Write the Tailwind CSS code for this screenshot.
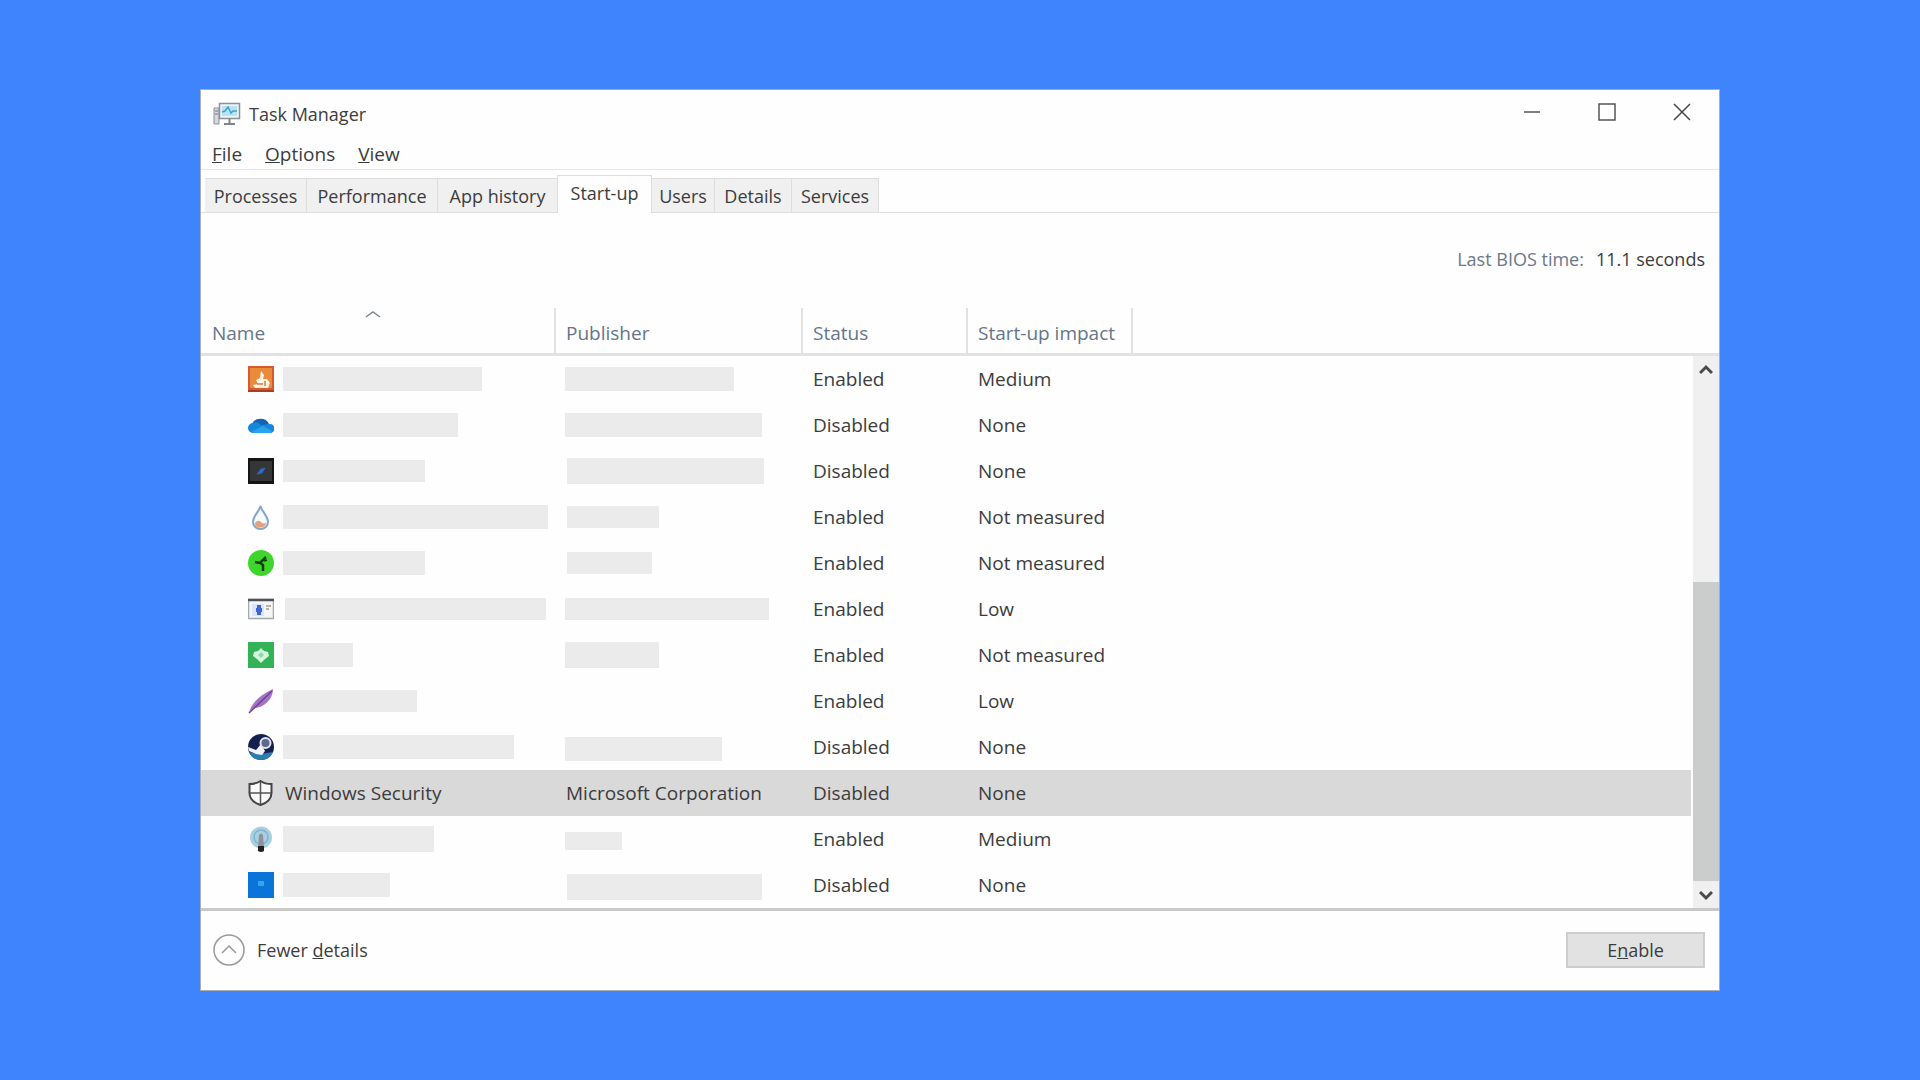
<!DOCTYPE html>
<html lang="en">
<head>
    <meta charset="UTF-8">
    <meta name="viewport" content="width=device-width, initial-scale=1.0">
    <title>Task Manager</title>
    <script src="https://cdn.jsdelivr.net/npm/@tailwindcss/browser@4"></script>
</head>
<body class="bg-[#3f83fd] min-h-screen flex items-center justify-center p-6 font-['Open_Sans','Noto_Sans',sans-serif] text-[18px] leading-6 text-[#3c3c3c]">
    <main class="w-full max-w-[1520px] bg-[#fefefe] border border-[#a9adb5]">
        <!-- Title bar -->
        <header class="flex items-center justify-between h-12 pl-3">
            <div class="flex items-center gap-2">
                <svg class="w-7 h-6" viewBox="0 0 28 24" fill="none">
                    <path d="M1 6h5v16H1z" fill="#d5d9dc" stroke="#8b9197"/>
                    <path d="M2 9h3M2 12h3" stroke="#6f767c"/>
                    <rect x="6.500" y="1.500" width="20" height="15" fill="#eef6fa" stroke="#8b9197" stroke-width="1.500"/>
                    <rect x="9" y="4" width="15" height="10" fill="#b9e3f4"/>
                    <path d="M9 10l3-1 3-4 3 6 2-2h4" stroke="#3ba3cf" stroke-width="1.500"/>
                    <path d="M16.500 17v4M11 22h11" stroke="#7d8388" stroke-width="2"/>
                </svg>
                <h1>Task Manager</h1>
            </div>
            <div class="flex h-full pb-1">
                <button type="button" aria-label="Minimize" class="w-[75px] flex items-center justify-center hover:bg-gray-200">
                    <svg class="size-[18px]" viewBox="0 0 18 18" stroke="#555" stroke-width="1.500"><path d="M1 9h16"/></svg>
                </button>
                <button type="button" aria-label="Maximize" class="w-[75px] flex items-center justify-center hover:bg-gray-200">
                    <svg class="size-[18px]" viewBox="0 0 18 18" fill="none" stroke="#555" stroke-width="1.500"><rect x="1" y="1" width="16" height="16"/></svg>
                </button>
                <button type="button" aria-label="Close" class="w-[75px] flex items-center justify-center hover:bg-red-500">
                    <svg class="size-[18px]" viewBox="0 0 18 18" stroke="#444" stroke-width="1.500"><path d="M1 1l16 16M17 1L1 17"/></svg>
                </button>
            </div>
        </header>

        <!-- Menu -->
        <nav class="flex items-center gap-[23px] h-8 pl-[11px] text-[19px] border-b border-[#e6e6e6]">
            <button type="button"><u>F</u>ile</button>
            <button type="button"><u>O</u>ptions</button>
            <button type="button"><u>V</u>iew</button>
        </nav>

        <!-- Tabs -->
        <div role="tablist" class="flex items-end h-[43px] pl-1 border-b border-[#dedede]">
            <button type="button" role="tab" class="w-[102px] h-[34px] bg-[#f0f0f0] border-t border-r border-[#dedede]">Processes</button>
            <button type="button" role="tab" class="w-[131px] h-[34px] bg-[#f0f0f0] border-t border-r border-[#dedede]">Performance</button>
            <button type="button" role="tab" class="w-[119px] h-[34px] bg-[#f0f0f0] border-t border-[#dedede]">App history</button>
            <button type="button" role="tab" aria-selected="true" class="w-[95px] h-[38px] -mb-px pb-1 bg-[#fefefe] border-t border-x border-[#dedede]">Start-up</button>
            <button type="button" role="tab" class="w-[63px] h-[34px] bg-[#f0f0f0] border-t border-r border-[#dedede]">Users</button>
            <button type="button" role="tab" class="w-[77px] h-[34px] bg-[#f0f0f0] border-t border-r border-[#dedede]">Details</button>
            <button type="button" role="tab" class="w-[87px] h-[34px] bg-[#f0f0f0] border-t border-r border-[#dedede]">Services</button>
        </div>

        <div class="flex items-center justify-end gap-3 h-[95px] pr-[14px] pb-1">
            <span class="text-[#6a788a]">Last BIOS time:</span>
            <span>11.1 seconds</span>
        </div>

        <!-- Start-up list -->
        <div class="flex border-b-3 border-[#c9c9c9]">
            <table class="flex-1 table-fixed border-separate border-spacing-0 text-left text-[19px]">
                <colgroup>
                    <col class="w-[355px]">
                    <col class="w-[247px]">
                    <col class="w-[165px]">
                    <col class="w-[165px]">
                    <col>
                </colgroup>
                <thead class="text-[#64758a]">
                    <tr class="h-12">
                        <th class="relative font-normal pl-[11px] pt-1 border-r-2 border-b-3 border-[#e2e2e2]">
                            Name
                            <svg class="absolute top-0.5 left-[164px] w-4 h-2" viewBox="0 0 16 8" fill="none" stroke="#7c8792" stroke-width="1.500"><path d="M1 7l7-5 7 5"/></svg>
                        </th>
                        <th class="font-normal pl-[10px] pt-1 border-r-2 border-b-3 border-[#e2e2e2]">Publisher</th>
                        <th class="font-normal pl-[10px] pt-1 border-r-2 border-b-3 border-[#e2e2e2]">Status</th>
                        <th class="font-normal pl-[10px] pt-1 border-r-2 border-b-3 border-[#e2e2e2]">Start-up impact</th>
                        <th class="border-b-3 border-[#e2e2e2]"></th>
                    </tr>
                </thead>
                <tbody>
                    <tr class="h-[46px]">
                        <td class="pl-[47px]">
                            <div class="flex items-center gap-[9px]">
                                <svg class="size-[26px]" viewBox="0 0 26 26">
                                    <rect width="26" height="26" fill="#d65a2c"/>
                                    <rect x="2" y="2" width="22" height="20" fill="#ea8a3c"/>
                                    <path d="M0 24h26v2H0z" fill="#a93f22"/>
                                    <path d="M13 5l3 4-1 4h4l3 4-2 5H7l-2-3 5-1-2-4 4-2z" fill="#fff3e6"/>
                                    <path d="M9 18h6M17 15v5" stroke="#e07a3a" stroke-width="1.500"/>
                                </svg>
                                <span class="w-[199px] h-6 bg-[#ebebeb]"></span>
                            </div>
                        </td>
                        <td class="pl-[9px]"><div class="w-[169px] h-6 bg-[#ebebeb]"></div></td>
                        <td class="pl-[10px]">Enabled</td>
                        <td class="pl-[10px]">Medium</td>
                        <td></td>
                    </tr>
                    <tr class="h-[46px]">
                        <td class="pl-[47px]">
                            <div class="flex items-center gap-[9px]">
                                <svg class="size-[26px]" viewBox="0 0 26 26">
                                    <path d="M4 12a9 8 0 0 1 17 0l-8 6z" fill="#1263b5"/>
                                    <path d="M5 21a5 5 0 0 1 0-10q4-2 8 2l9-1a4.500 4.500 0 0 1 0 9z" fill="#1688dc"/>
                                    <path d="M3 20l12-6 9 5q-1 2-3 2H6q-2 0-3-1z" fill="#27a4ee"/>
                                </svg>
                                <span class="w-[175px] h-6 bg-[#ebebeb]"></span>
                            </div>
                        </td>
                        <td class="pl-[9px]"><div class="w-[197px] h-6 bg-[#ebebeb]"></div></td>
                        <td class="pl-[10px]">Disabled</td>
                        <td class="pl-[10px]">None</td>
                        <td></td>
                    </tr>
                    <tr class="h-[46px]">
                        <td class="pl-[47px]">
                            <div class="flex items-center gap-[9px]">
                                <svg class="size-[26px]" viewBox="0 0 26 26">
                                    <rect width="26" height="26" fill="#151515"/>
                                    <rect x="2" y="3" width="22" height="20" fill="#343638"/>
                                    <path d="M9 16l4-5 4-1-3 5z" fill="#2f6bd8" stroke="#2f5fb8"/>
                                </svg>
                                <span class="w-[142px] h-[22px] bg-[#ebebeb]"></span>
                            </div>
                        </td>
                        <td class="pl-[11px]"><div class="w-[197px] h-[26px] bg-[#ebebeb]"></div></td>
                        <td class="pl-[10px]">Disabled</td>
                        <td class="pl-[10px]">None</td>
                        <td></td>
                    </tr>
                    <tr class="h-[46px]">
                        <td class="pl-[47px]">
                            <div class="flex items-center gap-[9px]">
                                <svg class="size-[26px]" viewBox="0 0 26 26" fill="none">
                                    <path d="M12.500 2C11 8 5 12 5 18a7.500 7 0 0 0 15 0C20 12 14 8 12.500 2z" fill="#f6f9fd" stroke="#8ba3c7" stroke-width="2"/>
                                    <path d="M7 19q3-4 6-1t5 0q0 5-5.500 5.500T7 19z" fill="#e3a07c"/>
                                </svg>
                                <span class="w-[265px] h-6 bg-[#ebebeb]"></span>
                            </div>
                        </td>
                        <td class="pl-[11px]"><div class="w-[92px] h-[22px] bg-[#ebebeb]"></div></td>
                        <td class="pl-[10px]">Enabled</td>
                        <td class="pl-[10px]">Not measured</td>
                        <td></td>
                    </tr>
                    <tr class="h-[46px]">
                        <td class="pl-[47px]">
                            <div class="flex items-center gap-[9px]">
                                <svg class="size-[26px]" viewBox="0 0 26 26" fill="none">
                                    <circle cx="13" cy="13" r="13" fill="#3fd62b"/>
                                    <path d="M7 12l5 1 6-6M12 13l3 2v6" stroke="#123d10" stroke-width="2.500"/>
                                    <path d="M16 11l3-1" stroke="#123d10" stroke-width="1.500"/>
                                </svg>
                                <span class="w-[142px] h-6 bg-[#ebebeb]"></span>
                            </div>
                        </td>
                        <td class="pl-[11px]"><div class="w-[85px] h-[22px] bg-[#ebebeb]"></div></td>
                        <td class="pl-[10px]">Enabled</td>
                        <td class="pl-[10px]">Not measured</td>
                        <td></td>
                    </tr>
                    <tr class="h-[46px]">
                        <td class="pl-[47px]">
                            <div class="flex items-center gap-[11px]">
                                <svg class="size-[26px]" viewBox="0 0 26 26" fill="none">
                                    <rect x=".5" y="3.500" width="25" height="19" fill="#f4f5f7" stroke="#a5a8ad" stroke-width="1.500"/>
                                    <path d="M0 4h26" stroke="#4e5157" stroke-width="2.500"/>
                                    <rect x="4" y="8" width="12" height="12" fill="#dbe4f8"/>
                                    <path d="M11 9v10M8 14h6" stroke="#3c66d0" stroke-width="4"/>
                                    <path d="M18 10h5M18 13h3" stroke="#b9b0a6" stroke-width="2"/>
                                </svg>
                                <span class="w-[261px] h-[22px] bg-[#ebebeb]"></span>
                            </div>
                        </td>
                        <td class="pl-[9px]"><div class="w-[204px] h-[22px] bg-[#ebebeb]"></div></td>
                        <td class="pl-[10px]">Enabled</td>
                        <td class="pl-[10px]">Low</td>
                        <td></td>
                    </tr>
                    <tr class="h-[46px]">
                        <td class="pl-[47px]">
                            <div class="flex items-center gap-[9px]">
                                <svg class="size-[26px]" viewBox="0 0 26 26">
                                    <rect width="26" height="26" fill="#33b257"/>
                                    <path d="M13 6l3 3 4 1 1 4-4 3-4 4-4-4-4-3 1-4 4-1z" fill="#d6f5df"/>
                                    <path d="M13 10l3 3-3 3-3-3z" fill="#8fdba6"/>
                                </svg>
                                <span class="w-[70px] h-6 bg-[#ebebeb]"></span>
                            </div>
                        </td>
                        <td class="pl-[9px]"><div class="w-[94px] h-[26px] bg-[#ebebeb]"></div></td>
                        <td class="pl-[10px]">Enabled</td>
                        <td class="pl-[10px]">Not measured</td>
                        <td></td>
                    </tr>
                    <tr class="h-[46px]">
                        <td class="pl-[47px]">
                            <div class="flex items-center gap-[9px]">
                                <svg class="size-[26px]" viewBox="0 0 26 26" fill="none">
                                    <path d="M1 25C3 15 12 7 25 1c0 7-4 13-11 17-4 2-8 2-11 4z" fill="#a474c4"/>
                                    <path d="M1 25L24 3" stroke="#6f4294" stroke-width="1.500"/>
                                </svg>
                                <span class="w-[134px] h-[22px] bg-[#ebebeb]"></span>
                            </div>
                        </td>
                        <td></td>
                        <td class="pl-[10px]">Enabled</td>
                        <td class="pl-[10px]">Low</td>
                        <td></td>
                    </tr>
                    <tr class="h-[46px]">
                        <td class="pl-[47px]">
                            <div class="flex items-center gap-[9px]">
                                <svg class="size-[26px]" viewBox="0 0 26 26" fill="none">
                                    <circle cx="13" cy="13" r="13" fill="#14214f"/>
                                    <path d="M1 18q7 2 12 2l12-2a13 13 0 0 1-24 0z" fill="#2b7fb0"/>
                                    <path d="M0 13l8 3 5-6 4 7-3 4-6-1-7-3z" fill="#f1f4f8"/>
                                    <circle cx="17.500" cy="9" r="5" fill="#5c688c" stroke="#dfe4ee" stroke-width="2"/>
                                </svg>
                                <span class="w-[231px] h-6 bg-[#ebebeb]"></span>
                            </div>
                        </td>
                        <td class="pl-[9px] pt-1"><div class="w-[157px] h-6 bg-[#ebebeb]"></div></td>
                        <td class="pl-[10px]">Disabled</td>
                        <td class="pl-[10px]">None</td>
                        <td></td>
                    </tr>
                    <tr class="h-[46px] bg-[#d9d9d9]">
                        <td class="pl-[47px]">
                            <div class="flex items-center gap-[11px]">
                                <svg class="size-[26px]" viewBox="0 0 26 26" fill="none">
                                    <path d="M12.500 1Q8 4 1.500 4v9c0 6 5 10 11 12 6-2 11-6 11-12V4Q17 4 12.500 1z" fill="#fafafa" stroke="#444" stroke-width="2"/>
                                    <path d="M12.500 2v22M2 13h21" stroke="#555" stroke-width="1.500"/>
                                </svg>
                                Windows Security
                            </div>
                        </td>
                        <td class="pl-[10px]">Microsoft Corporation</td>
                        <td class="pl-[10px]">Disabled</td>
                        <td class="pl-[10px]">None</td>
                        <td></td>
                    </tr>
                    <tr class="h-[46px]">
                        <td class="pl-[47px]">
                            <div class="flex items-center gap-[9px]">
                                <svg class="size-[26px]" viewBox="0 0 26 26" fill="none">
                                    <circle cx="13" cy="11.500" r="11" fill="#a9cfe2"/>
                                    <circle cx="13" cy="11" r="7" stroke="#84b4cc" stroke-width="1.500"/>
                                    <path d="M10 22l1-13q2-3 4 0l1 13z" fill="#8d9499"/>
                                    <path d="M10 20h6v5q-3 2-6 0z" fill="#222"/>
                                </svg>
                                <span class="w-[151px] h-[26px] bg-[#ebebeb]"></span>
                            </div>
                        </td>
                        <td class="pl-[9px] pt-1"><div class="w-[57px] h-[18px] bg-[#ebebeb]"></div></td>
                        <td class="pl-[10px]">Enabled</td>
                        <td class="pl-[10px]">Medium</td>
                        <td></td>
                    </tr>
                    <tr class="h-[46px]">
                        <td class="pl-[47px]">
                            <div class="flex items-center gap-[9px]">
                                <svg class="size-[26px]" viewBox="0 0 26 26">
                                    <rect width="26" height="26" fill="#0b74d8"/>
                                    <path d="M10 9h6v5h-6z" fill="#35a5ea"/>
                                </svg>
                                <span class="w-[107px] h-6 bg-[#ebebeb]"></span>
                            </div>
                        </td>
                        <td class="pl-[11px] pt-1"><div class="w-[195px] h-[26px] bg-[#ebebeb]"></div></td>
                        <td class="pl-[10px]">Disabled</td>
                        <td class="pl-[10px]">None</td>
                        <td></td>
                    </tr>
                </tbody>
            </table>

            <!-- Scrollbar -->
            <div class="flex flex-col w-7">
                <div class="h-12 border-b-3 border-[#e2e2e2]"></div>
                <div class="flex-1 flex flex-col ml-0.5 bg-[#f0f0f0]">
                    <button type="button" aria-label="Scroll up" class="h-[27px] flex items-center justify-center">
                        <svg class="w-[14px] h-3" viewBox="0 0 14 12" fill="none" stroke="#4a4a4a" stroke-width="3"><path d="M1 9l6-6 6 6"/></svg>
                    </button>
                    <div class="flex-1"></div>
                    <div class="h-[299px] bg-[#cbcccc]"></div>
                    <button type="button" aria-label="Scroll down" class="h-[27px] flex items-center justify-center">
                        <svg class="w-[14px] h-3" viewBox="0 0 14 12" fill="none" stroke="#4a4a4a" stroke-width="3"><path d="M1 3l6 6 6-6"/></svg>
                    </button>
                </div>
            </div>
        </div>

        <!-- Footer -->
        <footer class="flex items-center justify-between h-[79px] pl-3 pr-[14px] pb-px">
            <button type="button" class="flex items-center gap-3">
                <svg class="size-8" viewBox="0 0 32 32" fill="none" stroke="#999">
                    <circle cx="16" cy="16" r="15" stroke-width="1.500"/>
                    <path d="M9 19l7-7 7 7" stroke-width="1.500"/>
                </svg>
                <span>Fewer <u>d</u>etails</span>
            </button>
            <button type="button" class="w-[139px] h-9 bg-[#e2e2e2] border-2 border-[#cdcdcd]">E<u>n</u>able</button>
        </footer>
    </main>
</body>
</html>
